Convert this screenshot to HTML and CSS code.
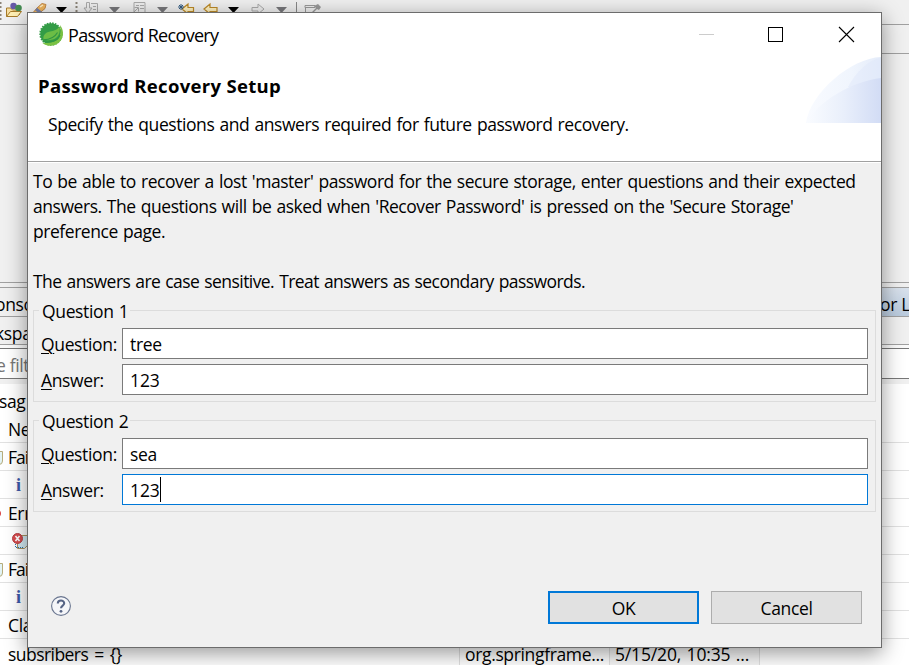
FILE: index.html
```html
<!DOCTYPE html>
<html lang="en">
<head>
<meta charset="utf-8">
<title>Password Recovery</title>
<link rel="stylesheet" href="styles.css">
</head>
<body>
<div class="workbench">
  <div class="toolbar">
    <svg width="330" height="24" viewBox="0 0 330 24">
      <path d="M.5 2v20M76.500 2v20" stroke="#8b8478" stroke-width="2" stroke-dasharray="2 2"/>
      <path d="M6.500 16.500V8h4l2 2h7v5" fill="#f8dfa0" stroke="#a77b29"/>
      <path d="M6.500 16.500l4-5h11l-4 5z" fill="#fff0b5" stroke="#a77b29"/>
      <circle cx="13.500" cy="6" r="3.200" fill="#6659a8"/><circle cx="18.500" cy="8" r="3.300" fill="#438b51"/>
      <path d="M31 15l6-7 5-4.500 4 1-1 4-6 5" fill="#efb55d" stroke="#c1884a"/><path d="M36 9l5 4" stroke="#7781a8" stroke-width="3"/><path d="M40 7l3-2" stroke="#fff0c8" stroke-width="1.500"/>
      <path d="M56 7h11l-5.500 6z" fill="#000"/>
      <path d="M109 7h11l-5.500 6zM157 7h11l-5.500 6zM276 7h11l-5.500 6z" fill="#77777b"/>
      <path d="M228 7h11l-5.500 6z" fill="#000"/>
      <g fill="#eee" stroke="#aaa"><path d="M91 3.500h6.500v9H91M86.500 2.500h3V8h2.500l-4 5-4-5h2.500zM93 6.500h3M93 9.500h3M134 12V2.500h11V12M136 5.500h3M140 5.500h4M140 8.500h4M133 13l5-5M134.500 7.500h4v4M252 7.500h6V4l6 5-6 5v-3h-6z"/></g>
      <g fill="#fff1bf" stroke="#bd8a27" stroke-width="1.200"><path d="M182 9l6-5v3.500h5.500v4H188V14zM204 9l6-5v3.500h7v4h-7V14z"/></g>
      <path d="M178 7h6M181 4v6M179 5l4 4M183 5l-4 4" stroke="#315b82"/>
      <path d="M296.500 2v20" stroke="#888"/><path d="M305 5.500h10v2h-10zM305.500 7v7h11" fill="#eee" stroke="#999"/><path d="M312 12l4-4-2-2 4-2 3 3-2 3-2-1-4 4" fill="#999"/>
    </svg>
  </div>
  <div class="band"></div>
  <div class="editor"></div>
  <div class="gap"></div>
  <div class="tabs"><span class="t-left">onsc</span><span class="tab">or L</span></div>
  <div class="path"><span>kspa</span></div>
  <div class="gap2"></div>
  <div class="filter"><span>e filt</span></div>
  <div class="gap3"></div>
  <div class="head"><span>ssag</span></div>
  <div class="row"><span>Ne</span></div>
  <div class="row"><i class="note"></i><span class="fai">Fai</span></div>
  <div class="row"><b>i</b></div>
  <div class="row"><i class="dot"></i><span>Err</span></div>
  <div class="row"><svg class="err" width="18" height="18" viewBox="0 0 18 18"><path d="M5.500 3.500h10v10l-3 3h-7z" fill="#d5edf6" stroke="#a99563"/><path d="M3.500 12v3.500h8" fill="none" stroke="#2874ae" stroke-dasharray="1 1"/><circle cx="5.500" cy="6.500" r="5" fill="#d84b4e" stroke="#b73f43"/><path d="M3.500 4l4 5M7.500 4l-4 5" stroke="#fff" stroke-width="1.600"/></svg></div>
  <div class="row"><i class="note"></i><span class="fai">Fai</span></div>
  <div class="row"><b>i</b></div>
  <div class="row"><span>Cla</span></div>
  <div class="row last"><span class="msg">subsribers = {}</span><span class="plug">org.springframe...</span><span class="date">5/15/20, 10:35 ...</span><span class="rest"></span></div>
</div>

<div class="dialog">
  <div class="titlebar">
    <svg class="logo" width="24" height="24" viewBox="0 0 24 24">
      <circle cx="12" cy="12" r="10.700" fill="#339c46" stroke="#339c46" stroke-width="2" stroke-dasharray="1.500 1.200"/>
      <path d="M21 3C25 8 25 15 21 19.500C16 25 8 25 3.500 21C10 21.500 18 20.500 20.500 14.500C22 10 21.500 7 21 3Z" fill="#7ac143"/>
      <path d="M20.500 4.500C18 8 15 8.800 11 9.500C6 10.500 3.800 13.500 4.500 17.500C9.500 19 17 18 19.500 13C21 10 21 7 20.500 4.500Z" fill="#6cbd45"/>
      <path d="M4.500 17.800C11 17.500 16 15 18.500 10.500M4 19.500C12 21 19 19 21 13" fill="none" stroke="#2f9644" stroke-width="1.100"/>
    </svg>
    <span class="caption">Password Recovery</span>
    <svg class="controls" width="160" height="20" viewBox="0 0 160 20" fill="none" shape-rendering="crispEdges">
      <path d="M2 10.500h15" stroke="#ccc"/>
      <rect x="71.500" y="3.500" width="14" height="14" stroke="#000"/>
      <path d="M142 3l15 15M157 3l-15 15" stroke="#000" shape-rendering="auto" stroke-width="1.100"/>
    </svg>
  </div>
  <div class="header">
    <div class="headtext">
      <h1>Password Recovery Setup</h1>
      <p>Specify the questions and answers required for future password recovery.</p>
    </div>
    <svg class="art" width="76" height="66" viewBox="0 0 76 66">
      <defs>
        <linearGradient id="a"><stop offset="0" stop-color="#f9fbff"/><stop offset=".6" stop-color="#f0f5fd"/><stop offset="1" stop-color="#e4ecfa"/></linearGradient>
        <linearGradient id="b"><stop offset="0" stop-color="#fafcff"/><stop offset=".5" stop-color="#e9effb"/><stop offset="1" stop-color="#d2dcf5"/></linearGradient>
      </defs>
      <path d="M1 66C5 36 46 1 76 0V66Z" fill="url(#a)"/>
      <path d="M43 30C51 15 63 3 76 1V30Z" fill="#dfe8f9" opacity=".5"/>
      <path d="M1 66C13 44 48 24 76 21V66Z" fill="url(#b)"/>
    </svg>
  </div>
  <div class="content">
    <div class="info">
      <p class="l1">To be able to recover a lost 'master' password for the secure storage, enter questions and their expected</p>
      <p class="l2">answers. The questions will be asked when 'Recover Password' is pressed on the 'Secure Storage'</p>
      <p class="l3">preference page.</p>
      <p class="l4">The answers are case sensitive. Treat answers as secondary passwords.</p>
    </div>
    <div class="group">
      <div class="legend">Question 1</div>
      <div class="field"><label><u>Q</u>uestion:</label><div class="input">tree</div></div>
      <div class="field"><label class="ans"><u>A</u>nswer:</label><div class="input num">123</div></div>
    </div>
    <div class="group">
      <div class="legend">Question 2</div>
      <div class="field"><label><u>Q</u>uestion:</label><div class="input">sea</div></div>
      <div class="field"><label class="ans"><u>A</u>nswer:</label><div class="input num focus">123<span class="caret"></span></div></div>
    </div>
  </div>
  <div class="footer">
    <svg class="help" width="22" height="22" viewBox="0 0 22 22" fill="none">
      <circle cx="11" cy="11" r="9.400" fill="#f5f6f9" stroke="#69758f" stroke-width="1.100"/>
      <path d="M7.800 8.500C7.800 4.600 14.200 4.600 14.200 8.300C14.200 10.600 11 10.600 11 13.300" stroke="#566485" stroke-width="2.100"/>
      <circle cx="11" cy="16.300" r="1.400" fill="#566485"/>
    </svg>
    <div class="btn ok">OK</div>
    <div class="btn cancel">Cancel</div>
  </div>
</div>
</body>
</html>
```

FILE: styles.css
```css
* { box-sizing: border-box; }
body {
  margin: 0;
  width: 909px;
  height: 665px;
  overflow: hidden;
  position: relative;
  background: #fff;
  color: #000;
  font: 17.5px/25px "Open Sans", "Noto Sans", sans-serif;
  letter-spacing: -0.35px;
  white-space: nowrap;
}
p, h1 { margin: 0; }
svg { display: block; flex: none; }

.workbench { display: flex; flex-direction: column; height: 665px; overflow: hidden; }
.workbench > div { flex: none; }
.toolbar { height: 25px; background: #f0f0f0; border-bottom: 1px solid #a0a0a0; }
.band { height: 29px; background: #f0f0f0; border-bottom: 1px solid #a0a0a0; }
.editor { height: 229px; background: #f0f0f0; border-bottom: 1px solid #a0a0a0; }
.gap { height: 4px; background: #f0f0f0; }
.tabs { height: 30px; display: flex; justify-content: space-between; background: #f0f0f0; border-top: 1px solid #a0a0a0; border-bottom: 1px solid #a0a0a0; line-height: 32px; }
.t-left { margin-left: -5px; }
.tab { width: 29px; background: linear-gradient(#d8e1ec, #b9cadd); }
.path { height: 28px; background: #f0f0f0; border-bottom: 1px solid #a0a0a0; line-height: 32px; }
.path span { margin-left: -5px; }
.gap2 { height: 3px; background: #fafafa; }
.filter { height: 31px; border: solid #777; border-width: 1px 0; background: #fff; color: #757575; line-height: 32px; }
.filter span { margin-left: -4px; }
.gap3 { height: 5px; background: #f0f0f0; }
.head { height: 31px; line-height: 34px; }
.head span { margin-left: -9px; }
.row { position: relative; height: 28px; display: flex; align-items: center; padding-left: 8px; border-bottom: 1px solid #e1e1e1; line-height: 28px; }
.row .fai { letter-spacing: -1px; }
.row b { margin-left: 8px; color: #3b58a8; font: bold 18px/24px "Liberation Serif", serif; }
.note { position: absolute; left: -10px; top: 8px; width: 13px; height: 14px; background: #e2f3f5; border: 1px solid #b6ac7c; border-radius: 0 0 4px 0; }
.dot { position: absolute; left: -8px; top: 10px; width: 9px; height: 9px; border-radius: 50%; background: #d94343; }
.err { margin-left: 4px; }
.last { height: 26px; border-bottom: 0; align-items: flex-start; line-height: 26px; }
.last span { height: 26px; padding-top: 2px; line-height: 26px; }
.row .msg { width: 451px; letter-spacing: -.55px; word-spacing: 2px; }
.plug, .date, .rest { border-left: 1px solid #e0e0e0; padding-left: 5px; }
.plug { width: 150px; }
.date { width: 150px; background: #f7f7f7; letter-spacing: -.15px; word-spacing: 1px; }
.rest { width: 150px; }

.dialog {
  position: absolute;
  left: 27px;
  top: 12px;
  width: 855px;
  height: 636px;
  display: flex;
  flex-direction: column;
  background: #f0f0f0;
  border: 1px solid #6c6c6c;
  box-shadow: 0 5px 20px rgba(0, 0, 0, .42);
}
.titlebar { height: 44px; display: flex; align-items: flex-start; padding: 9px 24px 0 11px; background: #fff; }
.caption { margin: 1px auto 0 5px; font-size: 18px; letter-spacing: -.68px; }
.controls { margin-top: 2px; }
.header { height: 105px; display: flex; justify-content: space-between; background: #fff; border-bottom: 1px solid #a0a0a0; box-shadow: 0 1px #fff; }
.headtext { padding: 16px 0 0 10px; }
h1 { font-size: 18.5px; line-height: 25px; font-weight: 700; letter-spacing: .32px; }
.headtext p { padding: 14px 0 0 10px; letter-spacing: -.43px; word-spacing: 1px; }
.content { padding: 7px 5px 0; }
.info { height: 141px; word-spacing: 1px; }
.l1 { letter-spacing: -.45px; }
.l2 { letter-spacing: -.45px; }
.l3 { letter-spacing: -.45px; }
.l4 { padding-top: 25px; letter-spacing: -.56px; }
.group { height: 92px; margin: 0 0 18px; border: 1px solid #dcdcdc; padding: 0 7px; display: flex; flex-direction: column; gap: 5px; }
.legend { align-self: flex-start; height: 23px; margin: -11px 0 0 -2px; padding: 0 2px 0 3px; background: #f0f0f0; line-height: 22px; word-spacing: 1px; }
.field { display: flex; height: 31px; line-height: 32px; }
.field label { width: 81px; }
.field u { text-underline-offset: 2px; text-decoration-thickness: 1px; }
.input { position: relative; width: 746px; padding-left: 7px; border: 1px solid #7a7a7a; background: #fff; line-height: 31px; }
.num { letter-spacing: -.1px; }
.focus { border-color: #0078d7; }
.caret { display: inline-block; width: 1px; height: 25px; background: #000; vertical-align: top; margin-top: 2px; }
.footer { display: flex; margin-top: auto; height: 56px; padding-right: 19px; }
.help { margin: 4px auto 0 22px; }
.btn { width: 151px; height: 33px; border: 1px solid #adadad; background: #e1e1e1; text-align: center; line-height: 33px; }
.ok { border: 2px solid #0078d7; margin-right: 12px; line-height: 31px; }
```
